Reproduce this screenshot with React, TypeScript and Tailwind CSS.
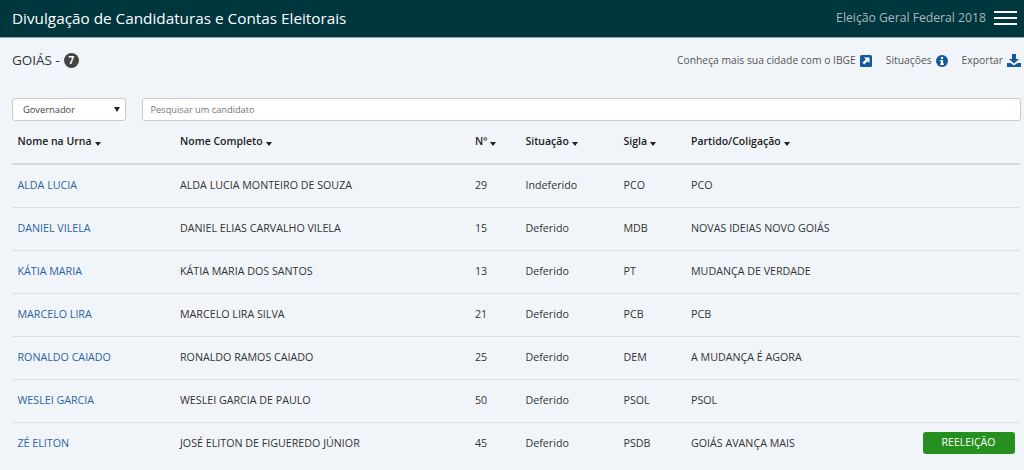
const rows = [
  ['ALDA LUCIA', 'ALDA LUCIA MONTEIRO DE SOUZA', '29', 'Indeferido', 'PCO', 'PCO'],
  ['DANIEL VILELA', 'DANIEL ELIAS CARVALHO VILELA', '15', 'Deferido', 'MDB', 'NOVAS IDEIAS NOVO GOIÁS'],
  ['KÁTIA MARIA', 'KÁTIA MARIA DOS SANTOS', '13', 'Deferido', 'PT', 'MUDANÇA DE VERDADE'],
  ['MARCELO LIRA', 'MARCELO LIRA SILVA', '21', 'Deferido', 'PCB', 'PCB'],
  ['RONALDO CAIADO', 'RONALDO RAMOS CAIADO', '25', 'Deferido', 'DEM', 'A MUDANÇA É AGORA'],
  ['WESLEI GARCIA', 'WESLEI GARCIA DE PAULO', '50', 'Deferido', 'PSOL', 'PSOL'],
  ['ZÉ ELITON', 'JOSÉ ELITON DE FIGUEREDO JÚNIOR', '45', 'Deferido', 'PSDB', 'GOIÁS AVANÇA MAIS'],
]

const columns = ['Nome na Urna', 'Nome Completo', 'Nº', 'Situação', 'Sigla', 'Partido/Coligação']

const Caret = () => <span className="ml-[3px] inline-block translate-y-[1px] border-x-[3.5px] border-t-[4px] border-x-transparent border-t-[#222]" />

const App = () => {
  return (
    <div className="h-[470px] w-[1024px] overflow-hidden bg-[#f1f5fa] font-['Open_Sans',sans-serif] text-[10.7px] text-[#333]">
      <header className="flex h-[38px] items-center justify-between border-b border-[#8a9ea3] bg-[#00363e] pl-3 pr-[7px]">
        <h1 className="text-[15.3px] text-white">Divulgação de Candidaturas e Contas Eleitorais</h1>
        <div className="flex items-center gap-[8px]">
          <span className="text-[12.2px] text-[#a9b9bb]">Eleição Geral Federal 2018</span>
          <div className="mb-px flex w-[23px] flex-col gap-1">
            <span className="h-[2px] bg-white" />
            <span className="h-[2px] bg-white" />
            <span className="h-[2px] bg-white" />
          </div>
        </div>
      </header>

      <div className="flex h-[45px] items-center justify-between pl-3 pr-[3px]">
        <div className="flex items-center gap-[4px] text-[13.5px] text-[#333]">
          GOIÁS -
          <span className="flex size-[15px] items-center justify-center rounded-full bg-[#444] text-[10px] font-bold text-white">7</span>
        </div>
        <div className="flex items-center text-[10.3px] text-[#555]">
          <span>Conheça mais sua cidade com o IBGE</span>
          <svg viewBox="0 0 12 12" className="ml-1 size-3">
            <rect width="12" height="12" rx="1.5" fill="#14589e" />
            <path d="M4 2.5h5.5V8L7.6 6.2 4.2 9.6 2.4 7.8 5.8 4.4z" fill="#fff" />
          </svg>
          <span className="ml-[14px]">Situações</span>
          <svg viewBox="0 0 12 12" className="ml-1 size-3">
            <circle cx="6" cy="6" r="6" fill="#14589e" />
            <rect x="4.9" y="2" width="2.2" height="2" fill="#fff" />
            <path d="M4.2 5h2.9v3.6h.8V10H4.2V8.6h.8V6.4h-.8z" fill="#fff" />
          </svg>
          <span className="ml-[14px]">Exportar</span>
          <svg viewBox="0 0 14 13" className="ml-[4px] h-[13px] w-[14px]" fill="#14589e">
            <path d="M5 0h4v5h3L7 9.5 2 5h3z" />
            <path d="M0 9h3.5L7 11.5 10.5 9H14v4H0z" />
          </svg>
        </div>
      </div>

      <div className="mt-[15px] flex gap-[15.5px] pl-3 pr-[3px]">
        <div className="flex h-[23px] w-[114px] items-center justify-between rounded-[3px] border border-[#ccc] bg-white pl-[10px] pr-[5px] text-[9.3px] text-[#444]">
          Governador
          <span className="border-x-[3px] border-t-[5px] border-x-transparent border-t-[#222]" />
        </div>
        <input
          readOnly
          placeholder="Pesquisar um candidato"
          className="h-[23px] flex-1 rounded-[3px] border border-[#ccc] bg-white px-2 text-[9.25px] placeholder:text-[#777]"
        />
      </div>

      <table className="ml-3 w-[1008px] table-fixed border-collapse">
        <colgroup>
          <col className="w-[162.5px]" />
          <col className="w-[295px]" />
          <col className="w-[50.5px]" />
          <col className="w-[98px]" />
          <col className="w-[67.5px]" />
          <col />
        </colgroup>
        <thead>
          <tr className="h-[43px] border-b-2 border-[#d5d8dc]">
            {columns.map((column) => (
              <th key={column} className="px-[5.5px] text-left text-[10.5px] font-semibold text-[#222]">
                {column}
                <Caret />
              </th>
            ))}
          </tr>
        </thead>
        <tbody>
          {rows.map((row) => (
            <tr key={row[0]} className="h-[43px] border-b border-[#dcdfe3] last:border-b-0">
              <td className="px-[5.5px] pb-[1px] text-[#2b62a0]">{row[0]}</td>
              {row.slice(1, 5).map((cell, i) => (
                <td key={i} className="px-[5.5px] pb-[1px]">{cell}</td>
              ))}
              <td className="px-[5.5px] pb-[1px]">
                <div className="flex items-center justify-between">
                  {row[5]}
                  {row[0] === 'ZÉ ELITON' && (
                    <span className="flex h-[22px] w-[92px] items-center justify-center rounded-[3px] bg-[#26901f] text-[10.5px] text-white">REELEIÇÃO</span>
                  )}
                </div>
              </td>
            </tr>
          ))}
        </tbody>
      </table>
    </div>
  )
}

export default App
